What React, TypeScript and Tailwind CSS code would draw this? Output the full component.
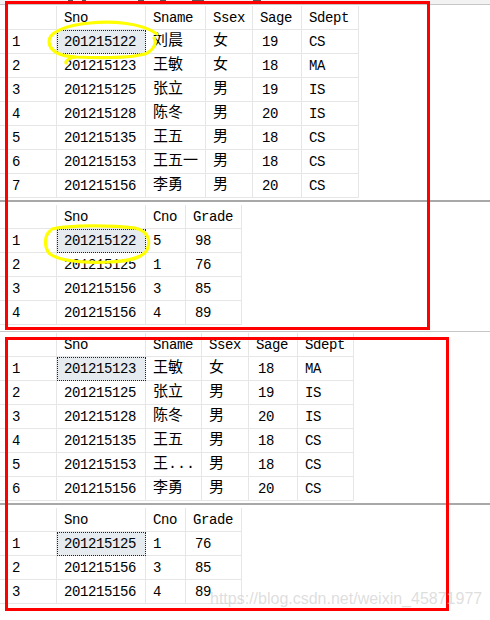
import React from 'react';
import clsx from 'clsx';

type Col = { w: string; head: string; cjk?: boolean; num?: boolean };

const studentCols: Col[] = [
  { w: 'w-[57px]', head: '' },
  { w: 'w-[89px]', head: 'Sno' },
  { w: 'w-[60px]', head: 'Sname', cjk: true },
  { w: 'w-[47px]', head: 'Ssex', cjk: true },
  { w: 'w-[49px]', head: 'Sage', num: true },
  { w: 'w-[57px]', head: 'Sdept' },
];

const studentCols2: Col[] = [
  { w: 'w-[57px]', head: '' },
  { w: 'w-[89px]', head: 'Sno' },
  { w: 'w-[56px]', head: 'Sname', cjk: true },
  { w: 'w-[47px]', head: 'Ssex', cjk: true },
  { w: 'w-[49px]', head: 'Sage', num: true },
  { w: 'w-[56px]', head: 'Sdept' },
];

const scCols: Col[] = [
  { w: 'w-[57px]', head: '' },
  { w: 'w-[89px]', head: 'Sno' },
  { w: 'w-[40px]', head: 'Cno' },
  { w: 'w-[56px]', head: 'Grade', num: true },
];

const students1 = [
  ['1', '201215122', '刘晨', '女', '19', 'CS'],
  ['2', '201215123', '王敏', '女', '18', 'MA'],
  ['3', '201215125', '张立', '男', '19', 'IS'],
  ['4', '201215128', '陈冬', '男', '20', 'IS'],
  ['5', '201215135', '王五', '男', '18', 'CS'],
  ['6', '201215153', '王五一', '男', '18', 'CS'],
  ['7', '201215156', '李勇', '男', '20', 'CS'],
];

const sc1 = [
  ['1', '201215122', '5', '98'],
  ['2', '201215125', '1', '76'],
  ['3', '201215156', '3', '85'],
  ['4', '201215156', '4', '89'],
];

const students2 = [
  ['1', '201215123', '王敏', '女', '18', 'MA'],
  ['2', '201215125', '张立', '男', '19', 'IS'],
  ['3', '201215128', '陈冬', '男', '20', 'IS'],
  ['4', '201215135', '王五', '男', '18', 'CS'],
  ['5', '201215153', '王...', '男', '18', 'CS'],
  ['6', '201215156', '李勇', '男', '20', 'CS'],
];

const sc2 = [
  ['1', '201215125', '1', '76'],
  ['2', '201215156', '3', '85'],
  ['3', '201215156', '4', '89'],
];

const cellBase =
  'flex h-[24px] shrink-0 items-center overflow-hidden whitespace-nowrap border-r border-b border-[#e6e6e6] pt-[2px]';

function Grid({ cols, rows }: { cols: Col[]; rows: string[][] }) {
  return (
    <div className="flex flex-col">
      <div className="flex">
        {cols.map((c, i) => (
          <div key={i} className={clsx(cellBase, c.w, 'pl-[7px]')}>
            {c.head}
          </div>
        ))}
      </div>
      {rows.map((r, ri) => (
        <div key={ri} className="flex">
          {r.map((v, ci) => {
            const c = cols[ci];
            return (
              <div
                key={ci}
                className={clsx(
                  cellBase,
                  c.w,
                  ci === 0 ? 'pl-[12px]' : c.num ? 'pl-[9px]' : 'pl-[7px]',
                  c.cjk && 'text-[15px] tracking-normal',
                  ri === 0 &&
                    ci === 1 &&
                    'bg-[#e6ebef] outline-1 outline-dotted outline-[#222] -outline-offset-1'
                )}
              >
                {v}
              </div>
            );
          })}
        </div>
      ))}
    </div>
  );
}

function Splitter() {
  return (
    <div className="flex flex-col">
      <div className="h-[2px]" />
      <div className="h-[2px] bg-[#a8a8a8]" />
      <div className="h-[3px]" />
    </div>
  );
}

export default function App() {
  return (
    <div className="relative h-[620px] w-[490px] overflow-hidden bg-white text-[14px] tracking-[-0.4px] text-black font-['Liberation_Mono','Noto_Sans_CJK_SC',monospace]">
      {/* first screenshot */}
      <div className="h-[4px] bg-[#f2f2f2]">
        <div className="flex h-[2px]">
          <span className="ml-[68px] w-[5px] bg-[#555]" />
          <span className="ml-[9px] w-[4px] bg-[#555]" />
          <span className="ml-[52px] w-[6px] bg-[#555]" />
          <span className="ml-[16px] w-[6px] bg-[#555]" />
          <span className="ml-[26px] w-[12px] bg-[#555]" />
          <span className="ml-[49px] w-[8px] bg-[#555]" />
        </div>
      </div>
      <div className="h-[1px] bg-[#c6c6c6]" />
      <div className="h-[1px]" />
      <Grid cols={studentCols} rows={students1} />
      <Splitter />
      <Grid cols={scCols} rows={sc1} />

      {/* second screenshot */}
      <div className="h-[6px]" />
      <div className="h-[1px] bg-[#c6c6c6]" />
      <div className="h-[1px]" />
      <Grid cols={studentCols2} rows={students2} />
      <Splitter />
      <Grid cols={scCols} rows={sc2} />

      {/* red annotation boxes */}
      <div className="pointer-events-none absolute left-[5px] top-[1px] h-[329px] w-[425px] border-[3px] border-[#ff0000]" />
      <div className="pointer-events-none absolute left-[5px] top-[337px] h-[274px] w-[444px] border-[3px] border-[#ff0000]" />

      {/* yellow marker circles */}
      <svg
        className="pointer-events-none absolute left-0 top-0"
        width="490"
        height="620"
        viewBox="0 0 490 620"
        fill="none"
        stroke="#ffff00"
        strokeWidth="3.2"
        strokeLinecap="round"
        strokeLinejoin="round"
      >
        <path d="M157 34 C140 22 110 21 90 23 C65 25 48 33 49 42 C50 51 60 56 75 57 C100 58 130 58 145 54 C154 50 157 43 154 38" />
        <path d="M75 57 C70 58 66 60 66 63" />
        <path d="M52 229 C70 225 110 225 135 228 C148 231 151 240 147 250 C142 258 130 261 110 262 C85 263 60 261 50 254 C44 248 44 236 50 231" />
      </svg>

      {/* watermark */}
      <div className="pointer-events-none absolute left-[210px] top-[591px] whitespace-nowrap text-[16px] leading-none tracking-normal text-[rgba(200,200,200,0.6)] font-['Liberation_Sans',Arial,sans-serif]">
        https://blog.csdn.net/weixin_45871977
      </div>
    </div>
  );
}
